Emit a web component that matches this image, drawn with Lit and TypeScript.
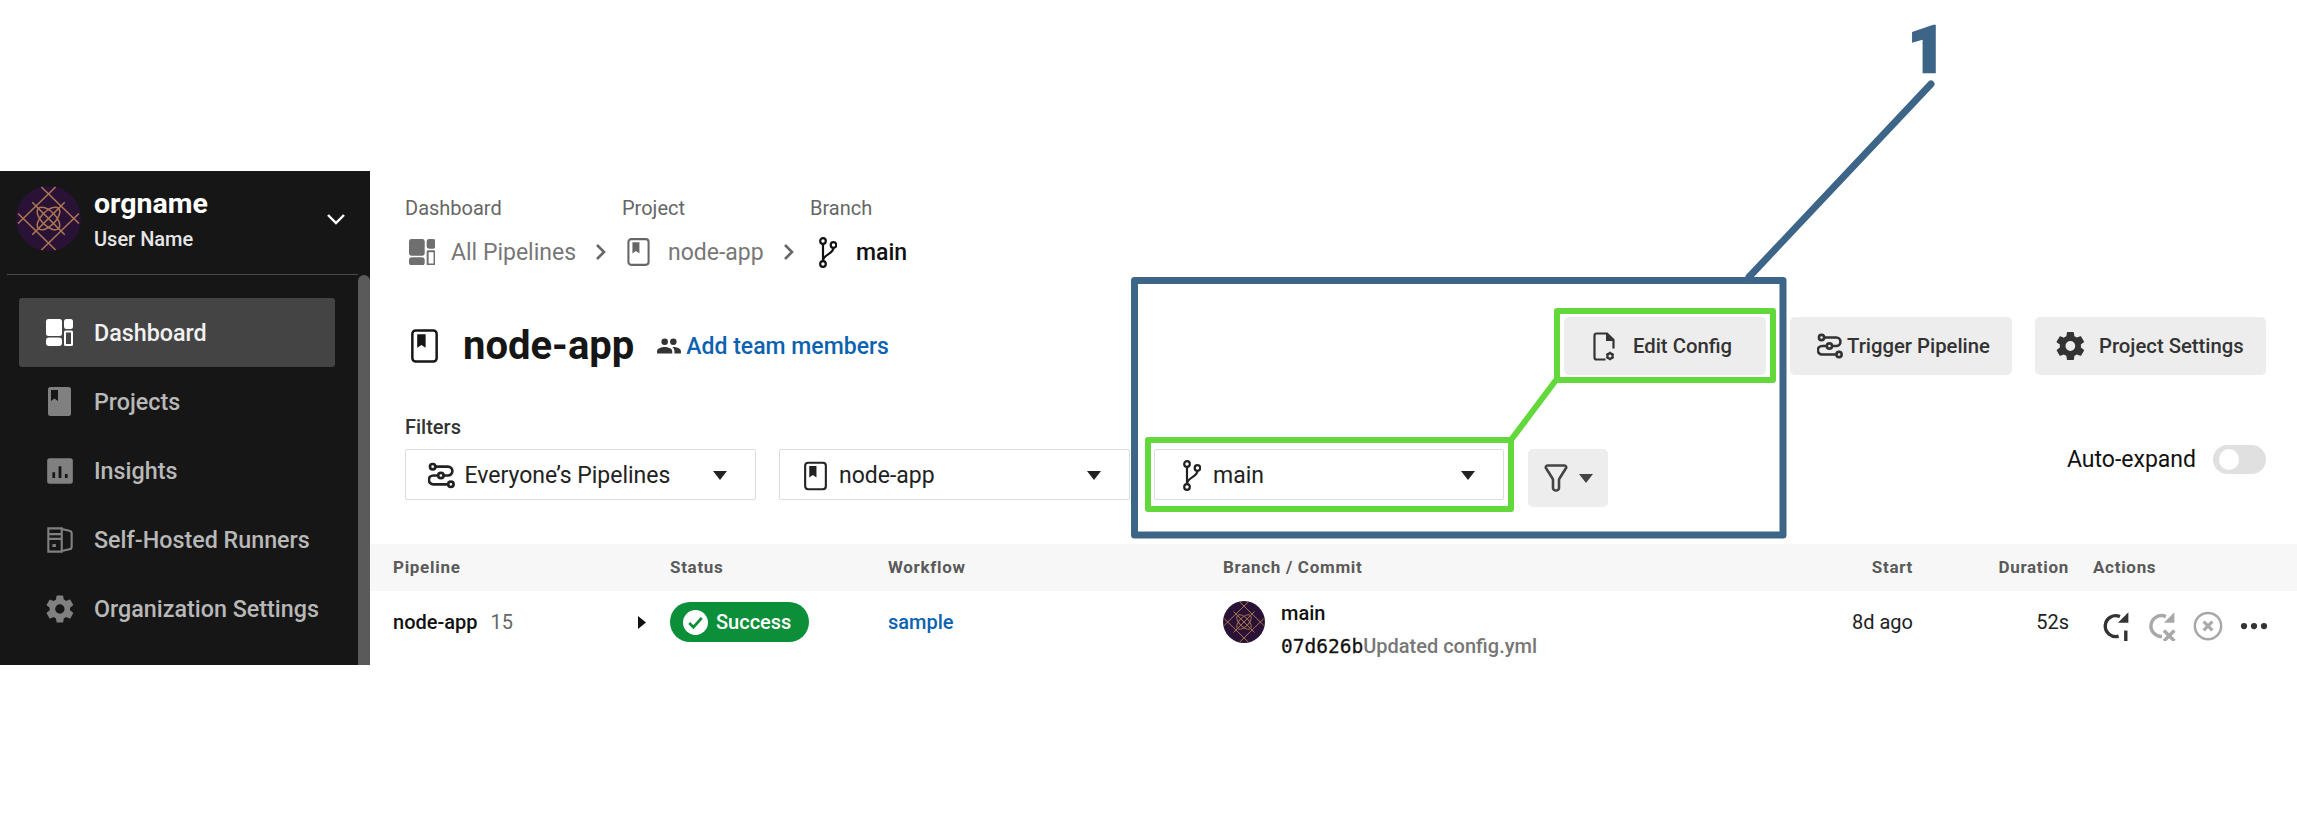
import { LitElement, html, css, svg } from 'lit';
import { customElement } from 'lit/decorators.js';

// icons, each drawn to its own viewBox
const gear = svg`<path fill="currentColor" fill-rule="evenodd" d="M19.4 13c.05-.33.08-.66.08-1s-.03-.67-.08-1l2.15-1.65a.5.5 0 0 0 .12-.65l-2.03-3.5a.5.5 0 0 0-.62-.22l-2.53 1a7.6 7.6 0 0 0-1.73-1l-.38-2.65A.5.5 0 0 0 13.9 2H9.9a.5.5 0 0 0-.5.42l-.38 2.65c-.62.26-1.2.6-1.73 1l-2.53-1a.5.5 0 0 0-.62.22L2.1 8.8a.5.5 0 0 0 .12.64L4.4 11c-.05.33-.08.67-.08 1s.03.67.08 1l-2.15 1.65a.5.5 0 0 0-.12.64l2.03 3.5c.13.23.4.3.62.22l2.53-1c.53.4 1.1.74 1.73 1l.38 2.65c.05.24.25.42.5.42h4c.25 0 .45-.18.5-.42l.38-2.65c.62-.26 1.2-.6 1.73-1l2.53 1c.23.08.5 0 .62-.22l2.03-3.5a.5.5 0 0 0-.12-.64zM11.9 15.5a3.5 3.5 0 1 1 0-7 3.5 3.5 0 0 1 0 7z"/>`;
const dash = svg`<g fill="currentColor"><rect x="0" y="0" width="16" height="17" rx="2.5"/><rect x="0" y="18.5" width="16" height="8.5" rx="3"/><rect x="18" y="0" width="9" height="10" rx="2.5"/></g><rect x="19" y="12.5" width="7" height="13.5" rx="0.5" fill="none" stroke="currentColor" stroke-width="2"/>`;
const book = svg`<rect x="1.2" y="1.2" width="21.6" height="27.6" rx="3" fill="none" stroke="currentColor" stroke-width="2.2"/><path fill="currentColor" d="M5.5 4.5h7.5v12l-3.75-2.5-3.75 2.5z"/>`;
const bookSolid = svg`<path fill="currentColor" fill-rule="evenodd" d="M2.5 0h18A2.5 2.5 0 0 1 23 2.5v24a2.5 2.5 0 0 1-2.5 2.5h-18A2.5 2.5 0 0 1 0 26.5v-24A2.5 2.5 0 0 1 2.5 0zM3 3v11l3.5-2.5L10 14V3z"/>`;
const branch = svg`<g fill="none" stroke="currentColor" stroke-width="2.2"><circle cx="5" cy="4" r="2.8"/><circle cx="5" cy="27" r="2.8"/><circle cx="15.5" cy="8" r="2.8"/><path d="M5 6.8v17.4M15.5 10.8c0 6.5-10.5 6.2-10.5 13.4"/></g>`;
const trigger = svg`<g fill="none" stroke="currentColor" stroke-width="2.3"><circle cx="5" cy="4.5" r="2.3"/><circle cx="12" cy="12" r="2.3"/><circle cx="20.5" cy="19.5" r="2.3"/><path d="M7.3 4.5H18a3.75 3.75 0 0 1 0 7.5h-3.7M9.7 12H5.5a3.75 3.75 0 0 0 0 7.5h12.7"/></g>`;
const insights = svg`<path fill="currentColor" fill-rule="evenodd" d="M3 1h18a2 2 0 0 1 2 2v18a2 2 0 0 1-2 2H3a2 2 0 0 1-2-2V3a2 2 0 0 1 2-2zM5.5 13v5h2.3v-5zM10.8 8v10h2.4V8zM16.2 14.5V18h2.3v-3.5z"/>`;
const runners = svg`<g fill="none" stroke="currentColor" stroke-width="1.8"><path d="M2 2h11.5v20H2zM2 7h11.5M2 11h11.5M13.5 2.5l6.5 1.5a2.5 2.5 0 0 1 2 2.5v11a2.5 2.5 0 0 1-2 2.5l-6.5 1.5"/></g><rect x="5.5" y="15.5" width="3" height="2.5" fill="currentColor"/>`;
const caret = html`<svg class="caret" viewBox="0 0 14 9"><path d="M0 0h14L7 9z" fill="currentColor"/></svg>`;
const chevron = html`<svg class="sep" viewBox="0 0 14 20"><path d="M3 3l7 7-7 7" fill="none" stroke="currentColor" stroke-width="2.6"/></svg>`;

const avatar = svg`<circle cx="32" cy="32" r="32" fill="#2a1236"/><g fill="none" stroke="#ab7853" stroke-width="1.5"><path d="M25 1 62 37M39 1 2 37M25 63 62 27M39 63 2 27"/><path d="M16 16 48 48M48 16 16 48"/><ellipse cx="32" cy="32" rx="14" ry="7" transform="rotate(45 32 32)"/><ellipse cx="32" cy="32" rx="14" ry="7" transform="rotate(-45 32 32)"/></g>`;

@customElement('app-root')
export class AppRoot extends LitElement {
  static styles = css`
    :host {
      display: block;
      position: relative;
      width: 2297px;
      height: 837px;
      background: #fff;
      overflow: hidden;
      font-family: Roboto, 'Liberation Sans', sans-serif;
      color: #111;
    }
    * {
      box-sizing: border-box;
    }
    svg {
      display: block;
      flex: none;
    }
    .frame {
      display: flex;
      height: 494px;
      margin-top: 171px;
      overflow: hidden;
    }

    /* sidebar */
    .side {
      width: 370px;
      flex: none;
      background: #161616;
      color: #fff;
      display: flex;
      flex-direction: column;
    }
    .org {
      height: 104px;
      margin-left: 7px;
      margin-right: 12px;
      padding: 15px 12px 0 9px;
      display: flex;
      border-bottom: 1px solid #4a4a4a;
    }
    .org .avatar {
      width: 65px;
      height: 65px;
    }
    .org .names {
      margin-left: 13px;
      flex: 1;
    }
    .org .name {
      font-size: 28.5px;
      font-weight: 700;
      line-height: 32px;
      margin-top: 2px;
    }
    .org .user {
      font-size: 20px;
      font-weight: 500;
      line-height: 24px;
      margin-top: 7px;
      color: #e6e6e6;
    }
    .org .chev {
      width: 20px;
      height: 12px;
      margin-top: 27px;
    }
    .side-body {
      flex: 1;
      display: flex;
      min-height: 0;
    }
    .nav {
      flex: 1;
      padding: 23px 23px 0 19px;
      overflow: hidden;
    }
    .item {
      height: 69.2px;
      display: flex;
      align-items: center;
      padding-left: 27px;
      border-radius: 3px;
      color: #b8b8b8;
      font-size: 23.3px;
      font-weight: 500;
    }
    .item svg {
      width: 28px;
      height: 28px;
      color: #808080;
      margin-right: 20px;
    }
    .item svg.proj-ic {
      width: 23px;
      height: 29px;
      margin-left: 2px;
      margin-right: 23px;
    }
    .item.on {
      background: #444;
      color: #f2f2f2;
    }
    .item.on svg {
      color: #fff;
      width: 27px;
      height: 27px;
      margin-right: 21px;
    }
    .scroll {
      width: 12px;
      background: #5a5a5a;
      border-radius: 6px 6px 0 0;
    }

    /* main */
    .main {
      flex: 1;
      min-width: 0;
      display: flex;
      flex-direction: column;
    }
    .crumbs {
      padding: 24px 0 0 35px;
      display: flex;
      height: 108px;
    }
    .crumb {
      display: flex;
      flex-direction: column;
    }
    .c-dash {
      width: 217px;
    }
    .c-proj {
      width: 188px;
    }
    .crumb label {
      font-size: 20px;
      line-height: 26px;
      color: #666;
    }
    .crumb .val {
      display: flex;
      align-items: center;
      height: 32px;
      margin-top: 15px;
      font-size: 23px;
      color: #777;
    }
    .crumb .val b {
      font-weight: 500;
      color: #111;
    }
    .c-dash .ic {
      width: 26.5px;
      height: 26.5px;
      margin: 0 16px 0 3.5px;
      color: #6f6f6f;
    }
    .c-proj .ic {
      width: 23px;
      height: 28px;
      margin: 0 18px 0 5px;
      color: #666;
    }
    .c-branch .ic {
      width: 19px;
      height: 31px;
      margin: 0 19px 0 8px;
      color: #111;
    }
    .sep {
      width: 14px;
      height: 20px;
      color: #666;
      margin-left: 18px;
    }
    .head {
      display: flex;
      align-items: center;
      height: 58px;
      margin-top: 38px;
      padding-right: 31px;
    }
    .title-ic {
      width: 27px;
      height: 34px;
      margin-left: 41px;
      color: #161616;
    }
    h1 {
      margin: 0 0 0 25px;
      font-size: 40px;
      font-weight: 700;
      line-height: 48px;
      color: #161616;
    }
    .team {
      display: flex;
      align-items: center;
      margin-left: 22px;
      color: #0b62b0;
      font-size: 23px;
      font-weight: 500;
    }
    .team svg {
      width: 26px;
      height: 26px;
      margin-right: 4px;
      color: #333;
    }
    .btns {
      margin-left: auto;
      display: flex;
      gap: 23px;
    }
    .btn {
      height: 58px;
      background: #ededed;
      border-radius: 5px;
      display: flex;
      align-items: center;
      font-size: 20.3px;
      font-weight: 500;
      color: #333;
    }
    .edit {
      width: 202px;
      padding-left: 29px;
      margin-right: 1px;
    }
    .edit svg {
      width: 22px;
      height: 29px;
      margin-right: 18px;
    }
    .trig {
      width: 222px;
      padding-left: 27px;
    }
    .trig svg {
      width: 26px;
      height: 26px;
      margin-right: 4px;
    }
    .proj {
      width: 231px;
      padding-left: 21px;
    }
    .proj svg {
      width: 29px;
      height: 30px;
      margin-right: 14px;
    }
    .filters {
      display: flex;
      padding-left: 35px;
      height: 169px;
    }
    .filters-l > label {
      display: block;
      font-size: 20px;
      font-weight: 500;
      line-height: 26px;
      color: #333;
      margin-top: 39px;
    }
    .selects {
      display: flex;
      gap: 23px;
      margin-top: 9px;
    }
    .sel {
      width: 351px;
      height: 51px;
      padding-top: 2px;
      border: 1px solid #dcdcdc;
      border-radius: 2px;
      display: flex;
      align-items: center;
      font-size: 23px;
      color: #222;
    }
    .sel .caret {
      margin-left: auto;
      margin-right: 28px;
    }
    .caret {
      width: 14px;
      height: 9px;
    }
    .ic-trig {
      width: 27px;
      height: 27px;
      margin: 0 10px 0 21.5px;
    }
    .ic-book {
      width: 23px;
      height: 30px;
      margin: 0 12px 0 24px;
    }
    .ic-branch {
      width: 19px;
      height: 31px;
      margin: 0 12px 0 27px;
    }
    .sel.narrow {
      width: 350px;
      margin-left: 1px;
    }
    .funnel {
      width: 80px;
      height: 58px;
      margin-left: 1px;
      background: #ededed;
      border-radius: 5px;
      display: flex;
      align-items: center;
      justify-content: center;
      color: #444;
      gap: 11px;
    }
    .funnel svg.fn {
      width: 24px;
      height: 28px;
    }
    .auto {
      margin-left: auto;
      margin-right: 31px;
      display: flex;
      align-items: center;
      height: 29px;
      margin-top: 70px;
      font-size: 23px;
      color: #111;
    }
    .toggle {
      width: 53px;
      height: 29px;
      border-radius: 15px;
      background: #e0e0e0;
      margin-left: 17px;
      padding: 4px 6px;
    }
    .toggle i {
      display: block;
      width: 20px;
      height: 21px;
      border-radius: 50%;
      background: #fff;
    }

    /* table */
    .row {
      display: grid;
      grid-template-columns: 277px 218px 335px 477px 213px 156px 1fr;
      padding-left: 23px;
      align-items: center;
    }
    .thead {
      height: 47px;
      padding-bottom: 2px;
      background: #f7f7f7;
      font-size: 17px;
      font-weight: 700;
      letter-spacing: 0.7px;
      color: #5a5a5a;
    }
    .r {
      text-align: right;
    }
    .last {
      padding-left: 24px;
    }
    .tbody {
      height: 74px;
      padding-bottom: 12px;
      font-size: 20px;
      color: #222;
    }
    .pipe {
      display: flex;
      align-items: center;
      font-weight: 500;
      color: #111;
    }
    .pipe span {
      margin-left: 13px;
      font-weight: 400;
      color: #666;
    }
    .pipe svg {
      width: 8px;
      height: 13px;
      margin-left: auto;
      margin-right: 24px;
    }
    .pill {
      display: inline-flex;
      align-items: center;
      width: 139px;
      height: 40px;
      border-radius: 20px;
      background: #0b8f38;
      color: #fff;
      font-size: 20px;
      font-weight: 500;
      padding-left: 13px;
    }
    .pill svg {
      width: 25px;
      height: 25px;
      margin-right: 8px;
    }
    .wf {
      color: #0b62b0;
      font-weight: 500;
    }
    .commit {
      display: flex;
      align-items: center;
    }
    .commit .avatar {
      width: 42px;
      height: 42px;
      margin-right: 16px;
    }
    .commit .l1 {
      font-weight: 500;
      color: #111;
      line-height: 24px;
      margin-top: 2px;
    }
    .commit .l2 {
      line-height: 24px;
      margin-top: 9px;
      margin-bottom: -13px;
      font-weight: 500;
      color: #777;
      white-space: nowrap;
    }
    .commit .l2 b {
      font-weight: 500;
      color: #111;
      font-family: 'DejaVu Sans Mono', monospace;
      font-size: 19.5px;
      -webkit-text-stroke: 0.3px #111;
    }
    .acts {
      display: flex;
      align-items: center;
      padding-left: 32px;
      margin-top: 8px;
      color: #333;
    }
    .acts svg {
      width: 30px;
      height: 30px;
    }
    .acts svg + svg {
      margin-left: 16px;
    }
    .acts .off {
      color: #a8a8a8;
    }

    /* annotation marks */
    .mark {
      position: absolute;
      left: 0;
      top: 0;
      width: 2297px;
      height: 837px;
      pointer-events: none;
    }
    .one {
      position: absolute;
      left: 1908px;
      top: 18px;
      font-family: Roboto, sans-serif;
      font-size: 65px;
      line-height: 65px;
      font-weight: 900;
      color: #3d6587;
      -webkit-text-stroke: 2.5px #3d6587;
    }
  `;

  render() {
    return html`
      <div class="frame">
        <aside class="side">
          <div class="org">
            <svg class="avatar" viewBox="0 0 64 64">${avatar}</svg>
            <div class="names">
              <div class="name">orgname</div>
              <div class="user">User Name</div>
            </div>
            <svg class="chev" viewBox="0 0 20 12"><path d="M2 2l8 8 8-8" fill="none" stroke="#fff" stroke-width="2.4"/></svg>
          </div>
          <div class="side-body">
            <nav class="nav">
              <div class="item on"><svg viewBox="0 0 27 27">${dash}</svg>Dashboard</div>
              <div class="item"><svg class="proj-ic" viewBox="0 0 23 29">${bookSolid}</svg>Projects</div>
              <div class="item"><svg viewBox="0 0 24 24">${insights}</svg>Insights</div>
              <div class="item"><svg viewBox="0 0 24 24">${runners}</svg>Self-Hosted Runners</div>
              <div class="item"><svg viewBox="1.6 1.6 20.8 20.8">${gear}</svg>Organization Settings</div>
            </nav>
            <div class="scroll"></div>
          </div>
        </aside>

        <main class="main">
          <div class="crumbs">
            <div class="crumb c-dash">
              <label>Dashboard</label>
              <div class="val"><svg class="ic" viewBox="0 0 27 27">${dash}</svg>All Pipelines${chevron}</div>
            </div>
            <div class="crumb c-proj">
              <label>Project</label>
              <div class="val"><svg class="ic" viewBox="0 0 24 30">${book}</svg>node-app${chevron}</div>
            </div>
            <div class="crumb c-branch">
              <label>Branch</label>
              <div class="val"><svg class="ic" viewBox="0 0 19 31">${branch}</svg><b>main</b></div>
            </div>
          </div>

          <div class="head">
            <svg class="title-ic" viewBox="0 0 24 30">${book}</svg>
            <h1>node-app</h1>
            <div class="team">
              <svg viewBox="0 0 24 24"><path fill="currentColor" d="M16 11a3 3 0 1 0 0-6 3 3 0 0 0 0 6zM8 11a3 3 0 1 0 0-6 3 3 0 0 0 0 6zm0 2c-2.3 0-7 1.2-7 3.5V19h14v-2.5C15 14.2 10.3 13 8 13zm8 0h-1c1.2.9 2 2 2 3.5V19h6v-2.5c0-2.3-4.7-3.5-7-3.5z"/></svg>
              Add team members
            </div>
            <div class="btns">
              <div class="btn edit">
                <svg viewBox="0 0 22 29" fill="none" stroke="currentColor" stroke-width="2.2"><path d="M12.5 27.5h-9a2 2 0 0 1-2-2v-22a2 2 0 0 1 2-2h10.5l6.5 6.5v8.5"/><path d="M13 1.5l7.5 7.5H13z" fill="currentColor" stroke="none"/><circle cx="17" cy="24" r="2.6" stroke-width="2.2"/><path d="M17 19.8v1.6M17 26.6v1.6M13.4 21.9l1.4.8M19.2 25.3l1.4.8M13.4 26.1l1.4-.8M19.2 22.7l1.4-.8" stroke-width="1.8"/></svg>
                Edit Config
              </div>
              <div class="btn trig"><svg viewBox="1 1 23 22">${trigger}</svg>Trigger Pipeline</div>
              <div class="btn proj"><svg viewBox="1.6 1.6 20.8 20.8">${gear}</svg>Project Settings</div>
            </div>
          </div>

          <div class="filters">
            <div class="filters-l">
              <label>Filters</label>
              <div class="selects">
                <div class="sel"><svg class="ic-trig" viewBox="1 1 23 22">${trigger}</svg>Everyone’s Pipelines${caret}</div>
                <div class="sel"><svg class="ic-book" viewBox="0 0 24 30">${book}</svg>node-app${caret}</div>
                <div class="sel narrow"><svg class="ic-branch" viewBox="0 0 19 31">${branch}</svg>main${caret}</div>
                <div class="funnel">
                  <svg class="fn" viewBox="0 0 24 28"><path d="M3.5 1.5h17c1.5 0 2.2 1.6 1.4 2.8L15.5 14.5c-.3.4-.5 1-.5 1.5v8c0 1.4-1.4 2.5-3 2.5s-3-1.1-3-2.5v-8c0-.5-.2-1.1-.5-1.5L2.1 4.3C1.3 3.1 2 1.5 3.5 1.5z" fill="none" stroke="currentColor" stroke-width="2.6"/></svg>
                  ${caret}
                </div>
              </div>
            </div>
            <div class="auto">Auto-expand<div class="toggle"><i></i></div></div>
          </div>

          <div class="row thead">
            <div>Pipeline</div>
            <div>Status</div>
            <div>Workflow</div>
            <div>Branch / Commit</div>
            <div class="r">Start</div>
            <div class="r">Duration</div>
            <div class="last">Actions</div>
          </div>
          <div class="row tbody">
            <div class="pipe">node-app<span>15</span><svg viewBox="0 0 8 13"><path d="M0 0l8 6.5L0 13z" fill="currentColor"/></svg></div>
            <div><div class="pill"><svg viewBox="0 0 24 24"><circle cx="12" cy="12" r="12" fill="#fff"/><path d="M6 12.5l4 4 8-9" fill="none" stroke="#0b8f38" stroke-width="2.6"/></svg>Success</div></div>
            <div class="wf">sample</div>
            <div class="commit">
              <svg class="avatar" viewBox="0 0 64 64">${avatar}</svg>
              <div>
                <div class="l1">main</div>
                <div class="l2"><b>07d626b</b>Updated config.yml</div>
              </div>
            </div>
            <div class="r">8d ago</div>
            <div class="r">52s</div>
            <div class="acts">
              <svg viewBox="2 1 21 23" fill="none" stroke="currentColor" stroke-width="2.6"><path d="M15.5 5.3A8 8 0 1 0 14.500 20.300"/><path d="M22 2v8h-8z" fill="currentColor" stroke="none"/><path d="M20 16v8"/></svg>
              <svg class="off" viewBox="2 1 21 23" fill="none" stroke="currentColor" stroke-width="2.6"><path d="M15.5 5.3A8 8 0 1 0 12.500 20.500"/><path d="M22 2v8h-8z" fill="currentColor" stroke="none"/><path d="M14 16l8 8M22 16l-8 8"/></svg>
              <svg class="off" viewBox="0 0 24 24" fill="none" stroke="currentColor" stroke-width="2"><circle cx="12" cy="12" r="10.5"/><path d="M8.5 8.5l7 7M15.5 8.5l-7 7" stroke-width="2.4"/></svg>
              <svg viewBox="0 0 24 24"><circle cx="4" cy="12" r="2.5" fill="currentColor"/><circle cx="12" cy="12" r="2.5" fill="currentColor"/><circle cx="20" cy="12" r="2.5" fill="currentColor"/></svg>
            </div>
          </div>
        </main>
      </div>

      <svg class="mark" viewBox="0 0 2297 837">
        <g fill="none" stroke="#3d6587" stroke-width="7" stroke-linejoin="round" stroke-linecap="round">
          <rect x="1134.5" y="280.5" width="648.5" height="254.5"/>
          <path d="M1749 277L1931 84"/>
        </g>
        <g fill="none" stroke="#62d83c" stroke-width="6" stroke-linejoin="round">
          <rect x="1557" y="311" width="216" height="69"/>
          <rect x="1148" y="440" width="363" height="69"/>
          <path d="M1556 380L1511 440"/>
        </g>
      </svg>
      <div class="one">1</div>
    `;
  }
}
